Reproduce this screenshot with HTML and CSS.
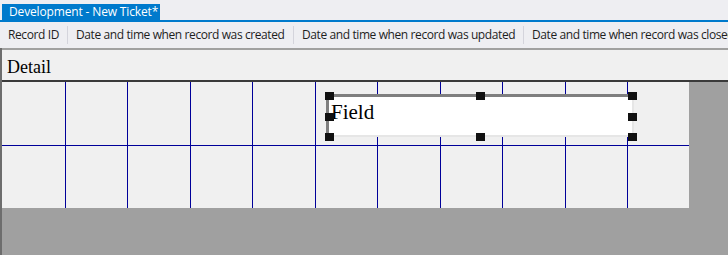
FILE: index.html
```html
<!DOCTYPE html>
<html>
<head>
<meta charset="utf-8">
<link rel="stylesheet" href="styles.css">
</head>
<body>
<div class="tabstrip">
  <div class="tab">Development - New Ticket*</div>
</div>
<div class="header">
  <div class="col c1">Record ID</div>
  <div class="col c2">Date and time when record was created</div>
  <div class="col c3">Date and time when record was updated</div>
  <div class="col c4">Date and time when record was closed</div>
</div>
<div class="designer">
  <div class="band">Detail</div>
  <div class="canvas">
    <div class="grid">
      <div class="cell"></div><div class="cell"></div><div class="cell"></div><div class="cell"></div><div class="cell"></div><div class="cell"></div><div class="cell"></div><div class="cell"></div><div class="cell"></div><div class="cell"></div><div class="cell"></div>
      <div class="cell"></div><div class="cell"></div><div class="cell"></div><div class="cell"></div><div class="cell"></div><div class="cell"></div><div class="cell"></div><div class="cell"></div><div class="cell"></div><div class="cell"></div><div class="cell"></div>
      <div class="field">Field</div>
      <div class="handle h-tl"></div>
      <div class="handle h-tm"></div>
      <div class="handle h-tr"></div>
      <div class="handle h-ml"></div>
      <div class="handle h-mr"></div>
      <div class="handle h-bl"></div>
      <div class="handle h-bm"></div>
      <div class="handle h-br"></div>
    </div>
  </div>
</div>
</body>
</html>
```
FILE: styles.css
```css
html, body {
  margin: 0;
  padding: 0;
}
body {
  width: 728px;
  height: 255px;
  overflow: hidden;
  background: #eeeef2;
  font-family: "Open Sans", "Noto Sans", "Liberation Sans", sans-serif;
}
.tabstrip {
  padding-top: 4px;
  padding-left: 2px;
  height: 16px;
  border-bottom: 2px solid #007acc;
  display: flex;
}
.tab {
  width: 158px;
  height: 16px;
  background: #007acc;
  color: #ffffff;
  font-size: 12px;
  line-height: 16px;
  padding-left: 7px;
  box-sizing: border-box;
  white-space: nowrap;
  letter-spacing: -0.15px;
}
.header {
  display: flex;
  height: 26px;
  align-items: center;
  background: #eeeef2;
  font-size: 12px;
  color: #1e1e1e;
  white-space: nowrap;
  overflow: hidden;
}
.col {
  padding-left: 8px;
  box-sizing: border-box;
  height: 18px;
  line-height: 18px;
  border-right: 1px solid #d4d4dc;
  flex: none;
  letter-spacing: -0.4px;
  overflow: hidden;
}
.c1 { width: 68px; }
.c2 { width: 226px; }
.c3 { width: 230px; }
.c4 { border-right: none; flex: 1; }
.designer {
  border-left: 2px solid #6d6d6d;
  height: 207px;
  display: flex;
  flex-direction: column;
}
.band {
  height: 28px;
  padding-top: 2px;
  border-top: 2px solid #a0a0a0;
  border-bottom: 2px solid #3a3a3a;
  background: #f0f0f0;
  font-family: "Liberation Serif", "Times New Roman", serif;
  font-size: 18px;
  line-height: 30px;
  padding-left: 5px;
  color: #000;
}
.canvas {
  flex: 1;
  background: #a0a0a0;
}
.grid {
  position: relative;
  width: 687px;
  height: 126px;
  background: #f0f0f0;
  display: grid;
  grid-template-columns: 63px 62px 63px 62px 63px 62px 63px 62px 63px 62px 62px;
  grid-template-rows: 63px 63px;
}
.cell {
  border-left: 1px solid #000099;
  box-sizing: border-box;
}
.cell:nth-child(11n+1) {
  border-left: none;
}
.cell:nth-child(n+12) {
  border-top: 1px solid #000099;
}
.field {
  position: absolute;
  left: 324px;
  top: 12px;
  width: 308px;
  height: 43px;
  box-sizing: border-box;
  background: #ffffff;
  border-top: 3px solid #7f7f7f;
  border-left: 3px solid #7f7f7f;
  border-right: 2px solid #e6e6e6;
  border-bottom: 2px solid #e6e6e6;
  font-family: "Liberation Serif", "Times New Roman", serif;
  font-size: 21px;
  line-height: 24px;
  padding-left: 2px;
  padding-top: 3px;
  color: #000;
}
.handle {
  position: absolute;
  width: 9px;
  height: 8px;
  background: #111111;
}
.h-tl { left: 323px; top: 10px; }
.h-tm { left: 474px; top: 10px; }
.h-tr { left: 626px; top: 10px; }
.h-ml { left: 323px; top: 31px; }
.h-mr { left: 626px; top: 31px; }
.h-bl { left: 323px; top: 51px; }
.h-bm { left: 474px; top: 51px; }
.h-br { left: 626px; top: 51px; }
```
